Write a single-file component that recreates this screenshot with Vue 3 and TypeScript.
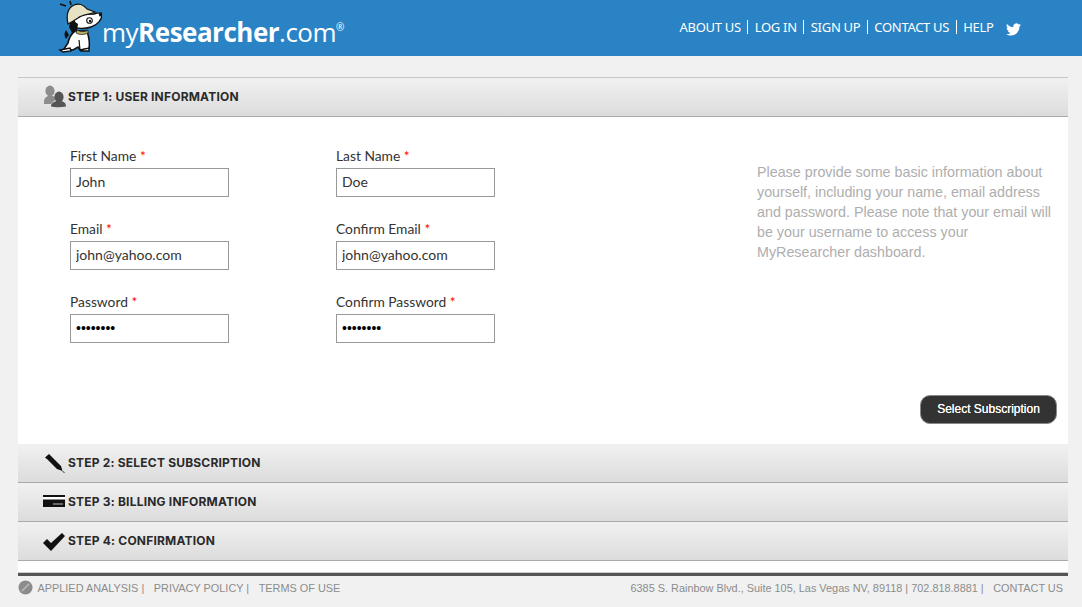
<script setup lang="ts">
interface Field {
  label: string;
  value: string;
  type: string;
}

const navLinks: string[] = ['ABOUT US', 'LOG IN', 'SIGN UP', 'CONTACT US', 'HELP'];

const fields: Field[] = [
  { label: 'First Name', value: 'John', type: 'text' },
  { label: 'Last Name', value: 'Doe', type: 'text' },
  { label: 'Email', value: 'john@yahoo.com', type: 'text' },
  { label: 'Confirm Email', value: 'john@yahoo.com', type: 'text' },
  { label: 'Password', value: 'password', type: 'password' },
  { label: 'Confirm Password', value: 'password', type: 'password' },
];
</script>

<template>
  <div class="page">
    <header class="topbar">
      <div class="brand">
        <svg class="dog" viewBox="0 0 44 56" width="44" height="56">
          <path d="M8 6 L2 4 M13 5 L12 1" stroke="#111" stroke-width="1.6" fill="none" />
          <path d="M8 30 C6 33 6 36 8 39 L11 35 Z" fill="#111" />
          <path d="M6 49 L10 43 C11 38 13 34 17 31 L29 31 C31 37 32 43 31 49 L22 50 L20 47 L15 50 Z" fill="#fff" stroke="#111" stroke-width="1.6" />
          <path d="M2 50 L12 48 L13 51 L5 52 Z M22 50 L31 48 L31 51 L23 51 Z" fill="#fff" stroke="#111" stroke-width="1.4" />
          <path d="M21 40 L22 50" stroke="#111" stroke-width="1.2" />
          <path d="M16 18 C20 14 28 14 36 14 C39 13 43 12 44 14 C44 19 40 25 33 27 C27 29 20 29 17 27 Z" fill="#fff" stroke="#111" stroke-width="1.4" />
          <path d="M13 19 L20 24 L19 30 L14 33 L11 27 Z" fill="#111" />
          <circle cx="31.5" cy="20.5" r="2.8" fill="#fff" stroke="#111" stroke-width="1.1" />
          <circle cx="32" cy="21" r="1.2" fill="#111" />
          <path d="M40.5 13.5 L44 12.5 L44 16 L41.5 16.5 Z" fill="#111" />
          <path d="M19 30 C23 32 27 32 30 30 L30 33 C26 35 22 35 18 33 Z" fill="#b9ad62" stroke="#111" stroke-width=".7" />
          <path d="M10 24 C8 15 10 8 16 5 C21 3 26 5 29 9 L37 12 C31 15 25 14 20 18 C17 20 14 22 10 24 Z" fill="#e8e2c4" stroke="#111" stroke-width="1.2" />
        </svg>
        <span class="wordmark">my<b>Researcher</b>.com<sup>®</sup></span>
      </div>
      <nav class="nav">
        <a v-for="link in navLinks" :key="link" class="nav-link">{{ link }}</a>
        <svg class="twitter" viewBox="0 0 24 24" width="15" height="15">
          <path d="M23.953 4.57a10 10 0 01-2.825.775 4.958 4.958 0 002.163-2.723c-.951.555-2.005.959-3.127 1.184a4.92 4.92 0 00-8.384 4.482C7.69 8.095 4.067 6.13 1.64 3.162a4.822 4.822 0 00-.666 2.475c0 1.71.87 3.213 2.188 4.096a4.904 4.904 0 01-2.228-.616v.06a4.923 4.923 0 003.946 4.827 4.996 4.996 0 01-2.212.085 4.936 4.936 0 004.604 3.417 9.867 9.867 0 01-6.102 2.105c-.39 0-.779-.023-1.17-.067a13.995 13.995 0 007.557 2.209c9.053 0 13.998-7.496 13.998-13.985 0-.21 0-.42-.015-.63A9.935 9.935 0 0024 4.59z" fill="#fff" />
        </svg>
      </nav>
    </header>

    <main class="panel">
      <div class="step first">
        <svg class="step-icon" viewBox="0 0 24 24" width="24" height="24">
          <ellipse cx="7" cy="6" rx="4.6" ry="5.4" fill="#8d8d8d" />
          <path d="M1 17 C1 13 3 12 5 11 L10 11 C12 12 13 13 13 14 L8 19 L1 19 Z" fill="#8d8d8d" />
          <ellipse cx="16" cy="12" rx="4.6" ry="5.4" fill="#555" />
          <path d="M8 21.5 C8 18 11 17 13.5 16 L18.5 16 C21 17 23 18 23 21.5 C18 22.5 12 22.5 8 21.5 Z" fill="#555" />
        </svg>
        <span>STEP 1: USER INFORMATION</span>
      </div>

      <section class="body">
        <form class="form" @submit.prevent>
          <div v-for="field in fields" :key="field.label" class="field">
            <label>{{ field.label }} <i>*</i></label>
            <input :type="field.type" :value="field.value" />
          </div>
        </form>
        <div class="side">
          <p class="help">
            Please provide some basic information about yourself, including your name, email address and password. Please note that your email will be your username to access your MyResearcher dashboard.
          </p>
          <button class="next" type="button">Select Subscription</button>
        </div>
      </section>

      <div class="step">
        <svg class="step-icon" viewBox="0 0 24 24" width="24" height="24">
          <path d="M2 6.5 L6 3 L8 5 L18 15 L19.5 20 L14 18 L4.5 8.5 Z" fill="#111" />
          <path d="M19.5 20 L21.5 22" stroke="#333" stroke-width="1" />
        </svg>
        <span>STEP 2: SELECT SUBSCRIPTION</span>
      </div>
      <div class="step">
        <svg class="step-icon" viewBox="0 0 24 24" width="24" height="24">
          <rect x="0" y="5" width="22" height="12" fill="#111" />
          <rect x="0" y="7" width="22" height="2.5" fill="#fff" />
          <rect x="10" y="13" width="10" height="2" fill="#666" />
        </svg>
        <span>STEP 3: BILLING INFORMATION</span>
      </div>
      <div class="step">
        <svg class="step-icon" viewBox="0 0 24 24" width="24" height="24">
          <path d="M0 14 L4 10 L8 14 L19 4 L22 7 L8 22 Z" fill="#111" />
        </svg>
        <span>STEP 4: CONFIRMATION</span>
      </div>
      <div class="panel-end"></div>
    </main>

    <footer class="footer">
      <div class="foot-left">
        <svg viewBox="0 0 16 16" width="15" height="15">
          <circle cx="8" cy="8" r="7.5" fill="#8c8c8c" />
          <path d="M4 12 L12 4" stroke="#bbb" stroke-width="1.5" />
        </svg>
        <span>APPLIED ANALYSIS |</span>
        <span>PRIVACY POLICY |</span>
        <span>TERMS OF USE</span>
      </div>
      <div class="foot-right">
        <span>6385 S. Rainbow Blvd., Suite 105, Las Vegas NV, 89118 | 702.818.8881 |</span>
        <span>CONTACT US</span>
      </div>
    </footer>
  </div>
</template>

<style>
body {
  background: #f1f1f1;
}
</style>

<style scoped>
.page {
  width: 1082px;
  height: 607px;
  overflow: hidden;
  background: #f1f1f1;
}

.topbar {
  height: 56px;
  background: #2a83c4;
  display: flex;
  justify-content: space-between;
  align-items: center;
  padding: 0 61px 0 58px;
  box-sizing: border-box;
}

.brand {
  display: flex;
  align-items: flex-end;
  height: 56px;
}

.wordmark {
  font-family: "Open Sans", sans-serif;
  font-size: 26px;
  color: #fff;
  margin-bottom: 6px;
  letter-spacing: -0.5px;
}

.wordmark sup {
  font-size: 10px;
  vertical-align: 11px;
  line-height: 0;
}

.nav {
  display: flex;
  align-items: center;
  padding-bottom: 2px;
}

.nav-link {
  font-family: "Noto Sans", sans-serif;
  font-size: 13px;
  letter-spacing: -0.3px;
  color: #fff;
  padding: 0 6.5px;
  border-right: 1px solid #fff;
  line-height: 14px;
}

.nav-link:last-of-type {
  border-right: none;
}

.twitter {
  margin-left: 6px;
  margin-top: 4px;
}

.panel {
  margin: 21px 14px 0 18px;
  background: #fff;
}

.step {
  height: 39px;
  box-sizing: border-box;
  display: flex;
  align-items: center;
  padding-left: 25px;
  gap: 1px;
  background: linear-gradient(#f1f1f1, #dcdcdc);
  border-bottom: 1px solid #aaa;
  font-family: Inter, sans-serif;
  font-weight: 700;
  font-size: 12px;
  letter-spacing: 0.2px;
  color: #2a2a2a;
}

.step span {
  margin-top: -2px;
}

.step.first {
  height: 40px;
  border-top: 1px solid #c6c6c6;
}

.body {
  height: 327px;
  box-sizing: border-box;
  display: flex;
  justify-content: space-between;
}

.form {
  width: 532px;
  padding: 29px 0 0 52px;
  box-sizing: border-box;
  display: grid;
  grid-template-columns: 266px 159px;
  grid-auto-rows: 73px;
}

.field label {
  display: block;
  font-family: Lato, sans-serif;
  font-size: 13.8px;
  line-height: 20px;
  color: #333;
  margin-bottom: 2px;
}

.field i {
  color: #f00;
  font-style: normal;
}

.field input {
  display: block;
  width: 159px;
  height: 29px;
  box-sizing: border-box;
  border: 1px solid #999;
  padding: 0 5px 2px;
  background: #fff;
  font-family: Lato, sans-serif;
  font-size: 14px;
  color: #333;
  outline: none;
}

.field input[type="password"] {
  font-family: "Liberation Sans", sans-serif;
  color: #000;
}

.side {
  width: 311px;
  box-sizing: border-box;
  padding-top: 45px;
  padding-right: 11px;
  display: flex;
  flex-direction: column;
  justify-content: space-between;
  padding-bottom: 20px;
}

.help {
  margin: 0;
  font-family: "Liberation Sans", sans-serif;
  font-size: 14.3px;
  line-height: 20px;
  color: #aeaeae;
}

.next {
  align-self: flex-end;
  width: 137px;
  height: 29px;
  padding: 0 0 2px;
  border: 1px solid #888;
  border-radius: 10px;
  background: #333;
  color: #fff;
  font-family: "Liberation Sans", sans-serif;
  font-size: 12px;
  font-weight: 400;
  text-shadow: 0 0 0.4px #fff;
}

.panel-end {
  height: 12px;
  box-sizing: border-box;
  background: #fff;
  border-bottom: 1px solid #ccc;
}

.footer {
  margin: 0 14px 0 18px;
  border-top: 3px solid #555;
  display: flex;
  justify-content: space-between;
  padding: 4px 5px 0 0;
  font-family: "Liberation Sans", sans-serif;
  font-size: 10.9px;
  color: #8c8c8c;
}

.foot-left,
.foot-right {
  display: flex;
  align-items: center;
  gap: 9.5px;
}

.foot-left svg {
  margin-right: -5px;
}
</style>
